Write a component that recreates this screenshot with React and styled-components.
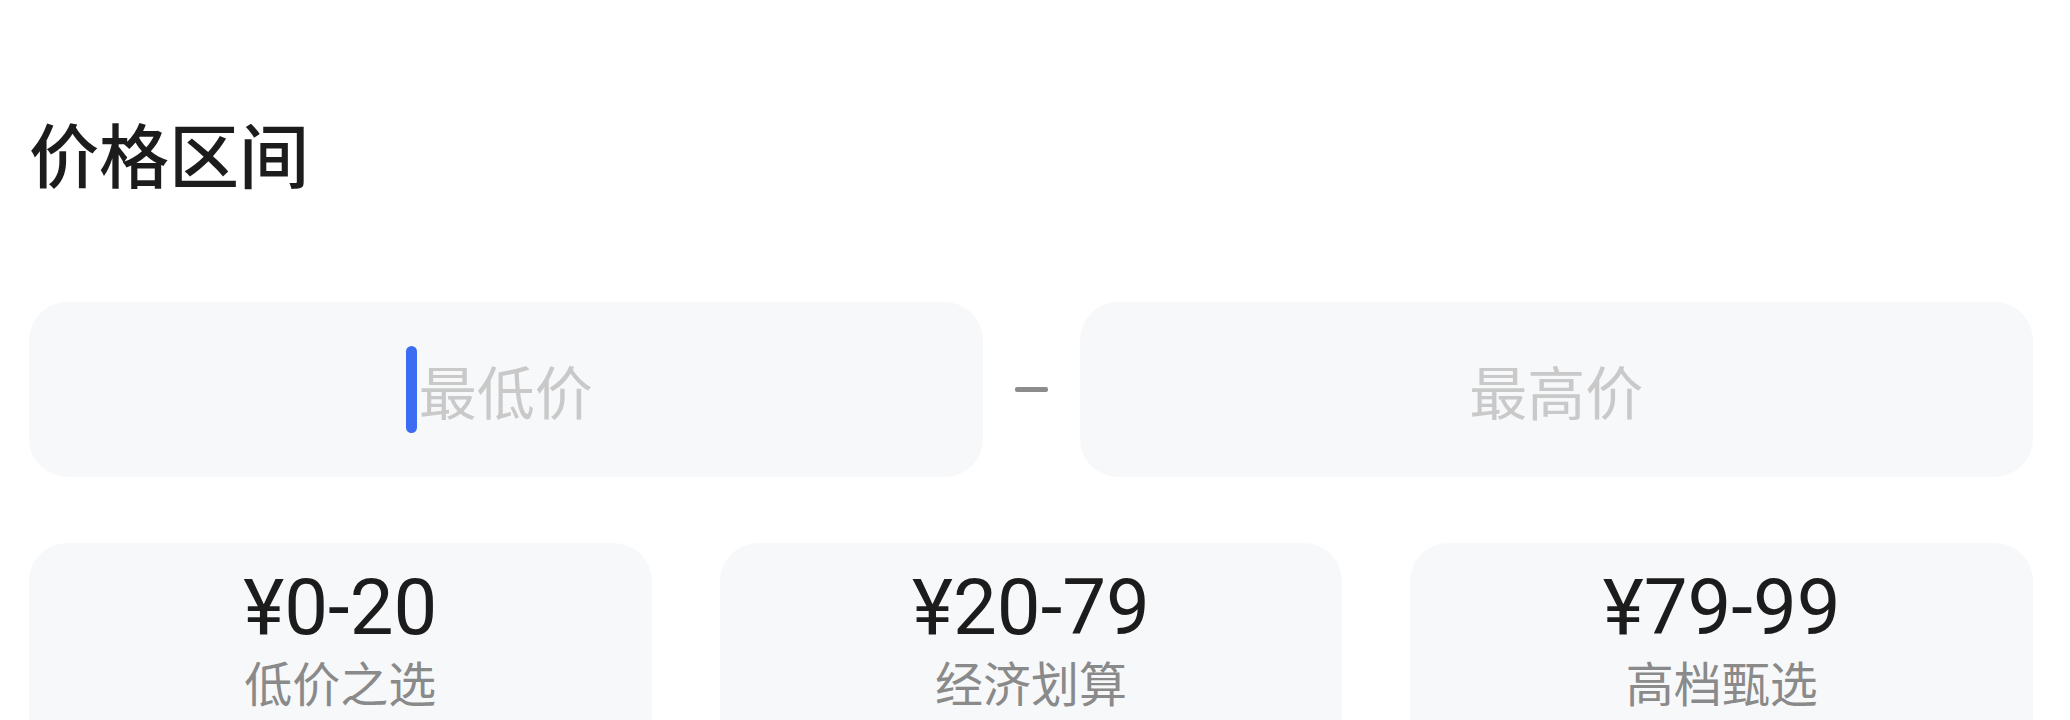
import React from 'react';
import styled, { createGlobalStyle } from 'styled-components';

const GlobalStyle = createGlobalStyle`
  html, body {
    margin: 0;
    padding: 0;
    background: #ffffff;
  }
  body {
    font-family: "Noto Sans CJK SC", "Noto Sans", sans-serif;
    overflow: hidden;
  }
`;

const Panel = styled.section`
  display: flex;
  flex-direction: column;
  padding: 105px 37px 0 29px;
  height: 720px;
  box-sizing: border-box;
  overflow: hidden;
`;

const Title = styled.h2`
  margin: 0;
  font-size: 70px;
  line-height: 96px;
  font-weight: 500;
  color: #1c1c1c;
`;

const RangeRow = styled.div`
  display: flex;
  align-items: center;
  margin-top: 101px;
  gap: 32px;
`;

const PriceInput = styled.div`
  flex: 1;
  height: 175px;
  border-radius: 38px;
  background: #f7f8fa;
  display: flex;
  align-items: center;
  justify-content: center;
`;

// caret sits left of the placeholder without pushing it off centre
const Caret = styled.span`
  display: inline-block;
  width: 11px;
  height: 87px;
  border-radius: 6px;
  background: #3b6cf2;
  margin-left: -13px;
  margin-right: 2px;
`;

const Placeholder = styled.span`
  font-size: 58px;
  line-height: 1;
  color: #c9c9c9;
`;

const Dash = styled.span`
  width: 33px;
  height: 5px;
  border-radius: 2px;
  background: #8c8c8c;
`;

const Presets = styled.div`
  display: grid;
  grid-template-columns: repeat(3, 1fr);
  gap: 68px;
  margin-top: 66px;
`;

const PresetCard = styled.div`
  height: 230px;
  border-radius: 38px;
  background: #f7f8fa;
  display: flex;
  flex-direction: column;
  align-items: center;
  padding-top: 26px;
  box-sizing: border-box;
`;

const Range = styled.span`
  font-family: Roboto, "Noto Sans", sans-serif;
  font-size: 78px;
  line-height: 78px;
  color: #1c1c1c;
`;

const Label = styled.span`
  margin-top: 6px;
  font-size: 48px;
  line-height: 56px;
  color: #8a8a8a;
`;

const presets = [
  { range: '¥0-20', label: '低价之选' },
  { range: '¥20-79', label: '经济划算' },
  { range: '¥79-99', label: '高档甄选' },
];

const App = () => (
  <>
    <GlobalStyle />
    <Panel>
      <Title>价格区间</Title>
      <RangeRow>
        <PriceInput>
          <Caret />
          <Placeholder>最低价</Placeholder>
        </PriceInput>
        <Dash />
        <PriceInput>
          <Placeholder>最高价</Placeholder>
        </PriceInput>
      </RangeRow>
      <Presets>
        {presets.map((p) => (
          <PresetCard key={p.range}>
            <Range>{p.range}</Range>
            <Label>{p.label}</Label>
          </PresetCard>
        ))}
      </Presets>
    </Panel>
  </>
);

export default App;
